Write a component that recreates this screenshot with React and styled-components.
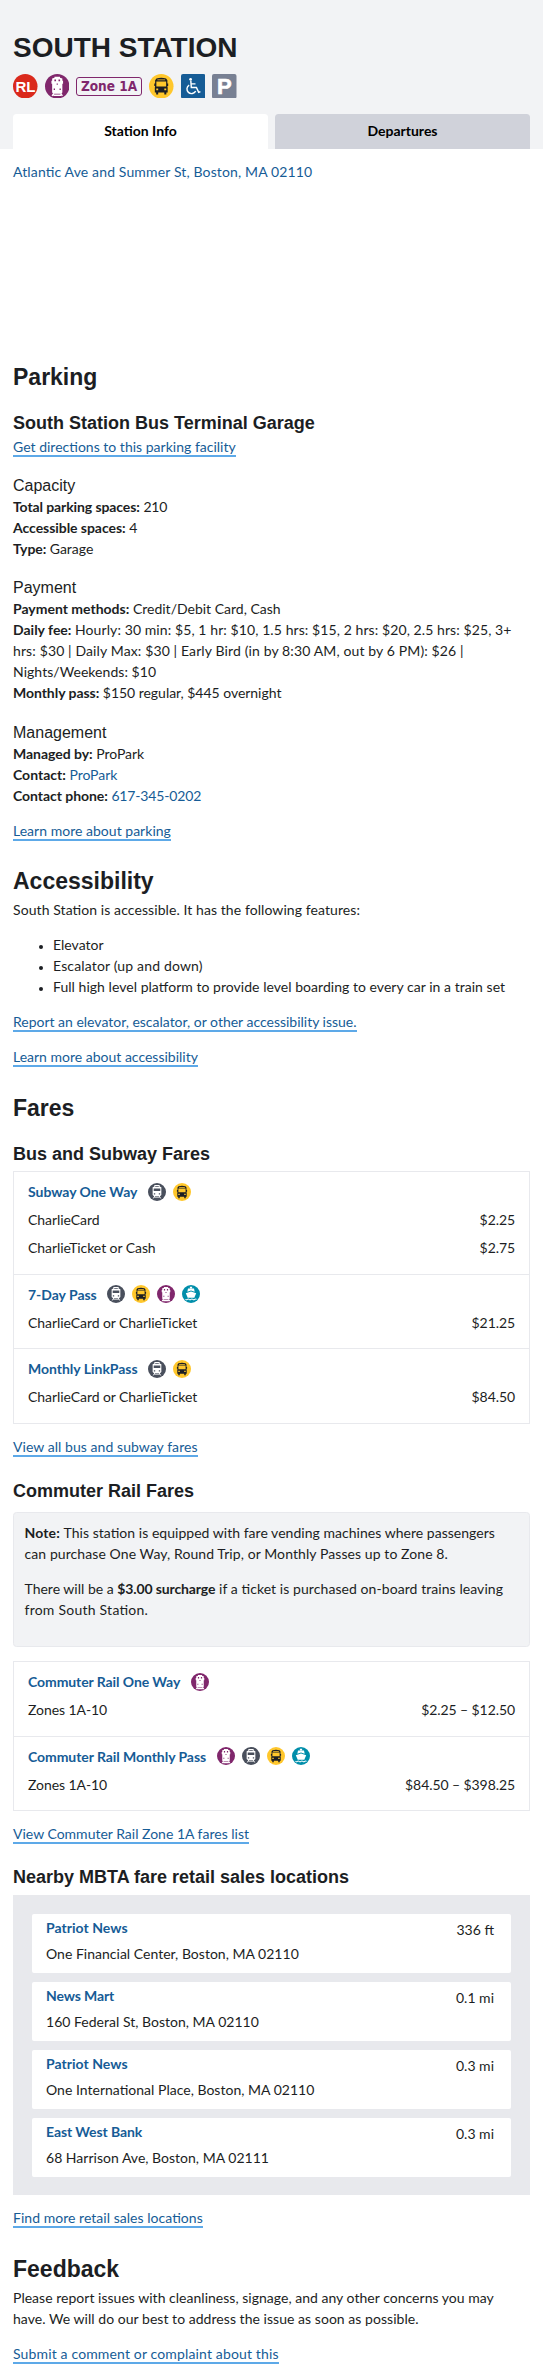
import React from 'react';
import styled, { createGlobalStyle } from 'styled-components';

const GlobalStyle = createGlobalStyle`
  *, *::before, *::after { box-sizing: border-box; }
  body {
    margin: 0;
    background: #fff;
    color: #1c1e23;
    font: 14px/21px Lato, "Liberation Sans", sans-serif;
    font-feature-settings: "liga";
  }
`;

const headingFont = '"Liberation Sans", Helvetica, Arial, sans-serif';

const Page = styled.div`
  width: 100%;
  height: 2379px;
  overflow: hidden;
`;

const Header = styled.header`
  height: 149px;
  padding: 31px 13px 0;
  background: #f2f3f5;
`;

const Title = styled.h1`
  margin: 0;
  font: 700 28px/33px ${headingFont};
`;

const Features = styled.div`
  display: flex;
  align-items: center;
  gap: 7px;
  height: 24.5px;
  margin-top: 9.75px;
`;

const ZoneTag = styled.span`
  width: 66px;
  height: 19px;
  border: 1px solid #80276c;
  border-radius: 3px;
  color: #80276c;
  font: 700 13.5px/17px "DejaVu Sans Condensed", "DejaVu Sans", sans-serif;
  text-align: center;
  white-space: nowrap;
`;

const Tabs = styled.nav`
  display: grid;
  grid-template-columns: 1fr 1fr;
  gap: 7px;
  margin-top: 15.75px;
`;

const Tab = styled.a`
  height: 35px;
  padding-top: 6px;
  border-radius: 3.5px 3.5px 0 0;
  background: ${(p) => (p.$active ? '#fff' : '#d0d2da')};
  color: #000;
  font-weight: 700;
  text-align: center;
`;

const Main = styled.main`
  padding: 12px 13px 0;
`;

const MapSpace = styled.div`
  height: 181px;
`;

const SectionTitle = styled.h2`
  margin: ${(p) => p.$top}px 0 4px;
  font: 700 23px/28px ${headingFont};
`;

const SubTitle = styled.h3`
  margin: ${(p) => p.$top}px 0 ${(p) => p.$bottom}px;
  font: 700 18px/24px ${headingFont};
`;

const GroupTitle = styled.h4`
  margin: ${(p) => p.$top || 18}px 0 0;
  font: 400 16px/21px ${headingFont};
`;

const Line = styled.div`
  letter-spacing: ${(p) => p.$track || 0}px;
  white-space: nowrap;
`;

const Strong = styled.b`
  font-weight: 700;
  letter-spacing: ${(p) => p.$track || 0}px;
`;

const Value = styled.span`
  letter-spacing: ${(p) => p.$track || 0}px;
`;

const Link = styled.a`
  color: #165c96;
  letter-spacing: ${(p) => p.$track || 0}px;
`;

const ActionRow = styled.div`
  margin-top: ${(p) => (p.$top === undefined ? 14 : p.$top)}px;
  height: 21px;
`;

const ActionLink = styled(Link)`
  border-bottom: 2px solid #5da9e8;
`;

const List = styled.ul`
  margin: 14px 0 0;
  padding: 0 0 0 26px;
  list-style: none;
`;

const Item = styled.li`
  display: flex;
  white-space: nowrap;
  letter-spacing: ${(p) => p.$track || 0}px;

  &::before {
    content: '';
    flex: none;
    width: 4px;
    height: 4px;
    margin: 11px 10px 0 0;
    border-radius: 50%;
    background: #1c1e23;
  }
`;

const Panel = styled.div`
  border: 1px solid #e8e9ed;
  margin-bottom: 11.75px;
`;

const Fare = styled.div`
  display: grid;
  gap: 7px;
  padding: 9px 14px 15.75px;
  & + & { border-top: 1px solid #e8e9ed; }
`;

const FareHead = styled.div`
  display: flex;
  height: 21px;
  color: #165c96;
  font-weight: 700;
  letter-spacing: ${(p) => p.$track || 0}px;
`;

const ModeIcons = styled.span`
  display: flex;
  gap: 7px;
  margin: 1.75px 0 0 10.75px;
`;

const FareRow = styled.div`
  display: flex;
  justify-content: space-between;
  letter-spacing: -0.07px;
`;

const Price = styled.span`
  letter-spacing: -0.08px;
`;

const Note = styled.div`
  height: 135px;
  margin-bottom: 14px;
  padding: 9px 10.5px 0;
  border: 1px solid #e8e9ed;
  border-radius: 3.5px;
  background: #f2f3f5;
`;

const NoteText = styled.div`
  margin: 0 0 14px;
`;

const Retail = styled.div`
  display: grid;
  gap: 9px;
  padding: 19px 19px 17.75px;
  background: #e8e9ed;
`;

const RetailCard = styled.div`
  display: flex;
  justify-content: space-between;
  height: 59px;
  padding: 3px 17px 0 14px;
  border-radius: 2px;
  background: #fff;
`;

const RetailName = styled.div`
  margin-bottom: 5px;
  color: #165c96;
  font-weight: 700;
  letter-spacing: ${(p) => p.$track || 0}px;
`;

const Distance = styled.span`
  padding-top: 2px;
`;

const Icon = styled.svg`
  display: block;
  flex: none;
  width: ${(p) => p.$size}px;
  height: ${(p) => p.$size}px;
`;

const RedLine = () => (
  <Icon $size={24.5} viewBox="0 0 24.5 24.5">
    <circle cx="12.25" cy="12.25" r="12.25" fill="#da291c" />
    <text x="12.5" y="17.6" textAnchor="middle" fill="#fff" fontFamily="Liberation Sans" fontWeight="700" fontSize="15">RL</text>
  </Icon>
);

const CommuterRail = ({ size = 18 }) => (
  <Icon $size={size} viewBox="0 0 24 24">
    <circle cx="12" cy="12" r="12" fill="#80276c" />
    <path fill="#fff" d="M9.3 2.6h5.4v1l2.3.8v2.2h.7v3H17v8.600l-1.300 1.200H8.300L7 18.200V9.600h-.7v-3H7V4.400l2.300-.8z" />
    <path fill="#80276c" d="M9.200 5.400h1.600v1.800H9.200zM13.200 5.400h1.600v1.800h-1.600zM11.400 9.300h1.200v1.200h-1.200zM8.500 14.300h1.300v1.300H8.500zM14.200 14.300h1.300v1.300h-1.300z" />
    <path stroke="#fff" strokeWidth="1.400" fill="none" d="M8.600 18.900L7 21.500M15.400 18.900l1.600 2.600M8.300 20.800h7.400" />
  </Icon>
);

const Bus = ({ size = 18 }) => (
  <Icon $size={size} viewBox="0 0 24 24">
    <circle cx="12" cy="12" r="12" fill="#ffc72c" />
    <path fill="#1c1e23" fillRule="evenodd" d="M7.300 4.300Q12 2.900 16.700 4.300L18 6v3.200h.8v2.600H18L18.300 13.500V18.200H17v2h-2v-2H9v2H7v-2H5.700v-4.700L6 11.800h-.8V9.200H6V6zM8.200 5.300v.9h7.600v-.9zM7.200 7.400v4.900h9.600V7.400zM7.100 14.200v1.700h1.900v-1.700zM15 14.200v1.700h1.900v-1.700z" />
  </Icon>
);

const Subway = () => (
  <Icon $size={18} viewBox="0 0 24 24">
    <circle cx="12" cy="12" r="12" fill="#494f5c" />
    <path fill="#fff" fillRule="evenodd" d="M8.500 2.800h7v1.700l2.300 1V16l-1.500 1.300H7.700L6.200 16V5.500l2.300-1zM9.600 4v1h4.800V4zM7.600 7.400v3.400h8.800V7.400zM7.800 13.600v1.600h1.800v-1.600zM14.400 13.600v1.600h1.800v-1.600z" />
    <path stroke="#fff" strokeWidth="1.300" fill="none" d="M9 17.300l-1.800 3.200M15 17.300l1.800 3.200M8.500 18.800h7" />
  </Icon>
);

const Ferry = () => (
  <Icon $size={18} viewBox="0 0 24 24">
    <circle cx="12" cy="12" r="12" fill="#008eaa" />
    <path fill="#fff" d="M10.500 2.400h3v1.800h-3zM8 4.800h8l.9 4.200L12 7.400 7.100 9z" />
    <path fill="#fff" d="M12 8.600l6.900 2.300-2.500 6.100H7.600l-2.500-6.100z" />
    <path stroke="#fff" strokeWidth="1.400" fill="none" d="M4.600 19.200q1.300 1 2.500 0 1.200-1 2.400 0 1.300 1 2.500 0 1.200-1 2.500 0 1.200 1 2.400 0 1.200-1 2.500 0" />
  </Icon>
);

const Wheelchair = () => (
  <Icon $size={24.5} viewBox="0 0 24 24">
    <rect width="24" height="24" rx="2" fill="#165c96" />
    <circle cx="9.400" cy="5.200" r="1.350" fill="#fff" />
    <path fill="none" stroke="#fff" strokeWidth="1.400" d="M9.600 6.500l.5 6.700h5l2.200 4.800 1.700-.8M9.900 9.700h4.300M8 10.800a4.550 4.550 0 1 0 6.400 6" />
  </Icon>
);

const Parking = () => (
  <Icon $size={24.5} viewBox="0 0 24.5 24.5">
    <rect width="24.5" height="24.5" rx="2" fill="#788093" />
    <text x="12.4" y="20.200" textAnchor="middle" fill="#fff" stroke="#fff" strokeWidth=".6" fontFamily="Liberation Sans" fontWeight="700" fontSize="22">P</text>
  </Icon>
);

const modeIcons = { subway: Subway, bus: Bus, rail: CommuterRail, ferry: Ferry };

const busFares = [
  { name: 'Subway One Way', track: -0.03, modes: ['subway', 'bus'], rows: [['CharlieCard', '$2.25'], ['CharlieTicket or Cash', '$2.75']] },
  { name: '7-Day Pass', track: -0.03, modes: ['subway', 'bus', 'rail', 'ferry'], rows: [['CharlieCard or CharlieTicket', '$21.25']] },
  { name: 'Monthly LinkPass', track: -0.02, modes: ['subway', 'bus'], rows: [['CharlieCard or CharlieTicket', '$84.50']] },
];

const railFares = [
  { name: 'Commuter Rail One Way', track: -0.08, modes: ['rail'], rows: [['Zones 1A-10', '$2.25 – $12.50']] },
  { name: 'Commuter Rail Monthly Pass', track: -0.06, modes: ['rail', 'subway', 'bus', 'ferry'], rows: [['Zones 1A-10', '$84.50 – $398.25']] },
];

const retailers = [
  ['Patriot News', 'One Financial Center, Boston, MA 02110', '336 ft', 0.03],
  ['News Mart', '160 Federal St, Boston, MA 02110', '0.1 mi', -0.12],
  ['Patriot News', 'One International Place, Boston, MA 02110', '0.3 mi', 0.03],
  ['East West Bank', '68 Harrison Ave, Boston, MA 02111', '0.3 mi', -0.1],
];

const FarePanel = ({ fares }) => (
  <Panel>
    {fares.map((fare) => (
      <Fare key={fare.name}>
        <FareHead $track={fare.track}>
          {fare.name}
          <ModeIcons>
            {fare.modes.map((mode) => {
              const ModeIcon = modeIcons[mode];
              return <ModeIcon key={mode} />;
            })}
          </ModeIcons>
        </FareHead>
        {fare.rows.map(([media, price]) => (
          <FareRow key={media}>
            <span>{media}</span>
            <Price>{price}</Price>
          </FareRow>
        ))}
      </Fare>
    ))}
  </Panel>
);

const Action = ({ top, track, children }) => (
  <ActionRow $top={top}>
    <ActionLink $track={track}>{children}</ActionLink>
  </ActionRow>
);

export default function App() {
  return (
    <Page>
      <GlobalStyle />
      <Header>
        <Title>SOUTH STATION</Title>
        <Features>
          <RedLine />
          <CommuterRail size={24.5} />
          <ZoneTag>Zone 1A</ZoneTag>
          <Bus size={24.5} />
          <Wheelchair />
          <Parking />
        </Features>
        <Tabs>
          <Tab $active>Station Info</Tab>
          <Tab>Departures</Tab>
        </Tabs>
      </Header>
      <Main>
        <Line><Link $track={0.14}>Atlantic Ave and Summer St, Boston, MA 02110</Link></Line>
        <MapSpace />

        <SectionTitle $top={0}>Parking</SectionTitle>
        <SubTitle $top={20} $bottom={1}>South Station Bus Terminal Garage</SubTitle>
        <Action top={0} track={0.01}>Get directions to this parking facility</Action>

        <GroupTitle>Capacity</GroupTitle>
        <Line><Strong $track={-0.1}>Total parking spaces:</Strong> <Value $track={-0.2}>210</Value></Line>
        <Line><Strong $track={-0.05}>Accessible spaces:</Strong> 4</Line>
        <Line><Strong $track={-0.1}>Type:</Strong> Garage</Line>

        <GroupTitle>Payment</GroupTitle>
        <Line><Strong>Payment methods:</Strong> Credit/Debit Card, Cash</Line>
        <Line><Strong>Daily fee:</Strong> <Value $track={0.09}>Hourly: 30 min: $5, 1 hr: $10, 1.5 hrs: $15, 2 hrs: $20, 2.5 hrs: $25, 3+</Value></Line>
        <Line $track={0.125}>hrs: $30 | Daily Max: $30 | Early Bird (in by 8:30 AM, out by 6 PM): $26 |</Line>
        <Line $track={0.05}>Nights/Weekends: $10</Line>
        <Line><Strong $track={-0.05}>Monthly pass:</Strong> <Value $track={-0.03}>$150 regular, $445 overnight</Value></Line>

        <GroupTitle $top={18.75}>Management</GroupTitle>
        <Line><Strong $track={-0.03}>Managed by:</Strong> <Value $track={-0.05}>ProPark</Value></Line>
        <Line><Strong>Contact:</Strong> <Link $track={-0.05}>ProPark</Link></Line>
        <Line><Strong $track={-0.05}>Contact phone:</Strong> <Link $track={-0.15}>617-345-0202</Link></Line>
        <Action top={13.75} track={0.022}>Learn more about parking</Action>

        <SectionTitle $top={26.5}>Accessibility</SectionTitle>
        <Line $track={0.08}>South Station is accessible. It has the following features:</Line>
        <List>
          <Item>Elevator</Item>
          <Item $track={0.16}>Escalator (up and down)</Item>
          <Item $track={0.035}>Full high level platform to provide level boarding to every car in a train set</Item>
        </List>
        <Action track={-0.01}>Report an elevator, escalator, or other accessibility issue.</Action>
        <Action>Learn more about accessibility</Action>

        <SectionTitle $top={26.75}>Fares</SectionTitle>
        <SubTitle $top={20} $bottom={5}>Bus and Subway Fares</SubTitle>
        <FarePanel fares={busFares} />
        <Action top={0} track={0.055}>View all bus and subway fares</Action>

        <SubTitle $top={22} $bottom={9}>Commuter Rail Fares</SubTitle>
        <Note>
          <NoteText>
            <Line><Strong $track={0.15}>Note:</Strong> <Value $track={0.03}>This station is equipped with fare vending machines where passengers</Value></Line>
            <Line $track={0.085}>can purchase One Way, Round Trip, or Monthly Passes up to Zone 8.</Line>
          </NoteText>
          <NoteText>
            <Line>There will be a <Strong $track={-0.12}>$3.00 surcharge</Strong> <Value $track={0.07}>if a ticket is purchased on-board trains leaving</Value></Line>
            <Line $track={0.24}>from South Station.</Line>
          </NoteText>
        </Note>
        <FarePanel fares={railFares} />
        <Action top={0}>View Commuter Rail Zone 1A fares list</Action>

        <SubTitle $top={21} $bottom={5.75}>Nearby MBTA fare retail sales locations</SubTitle>
        <Retail>
          {retailers.map(([name, address, distance, track], i) => (
            <RetailCard key={i}>
              <div>
                <RetailName $track={track}>{name}</RetailName>
                <Line $track={0.015}>{address}</Line>
              </div>
              <Distance>{distance}</Distance>
            </RetailCard>
          ))}
        </Retail>
        <Action top={12} track={0.035}>Find more retail sales locations</Action>

        <SectionTitle $top={27}>Feedback</SectionTitle>
        <Line $track={0.02}>Please report issues with cleanliness, signage, and any other concerns you may</Line>
        <Line $track={0.04}>have. We will do our best to address the issue as soon as possible.</Line>
        <Action track={0.145}>Submit a comment or complaint about this</Action>
      </Main>
    </Page>
  );
}
